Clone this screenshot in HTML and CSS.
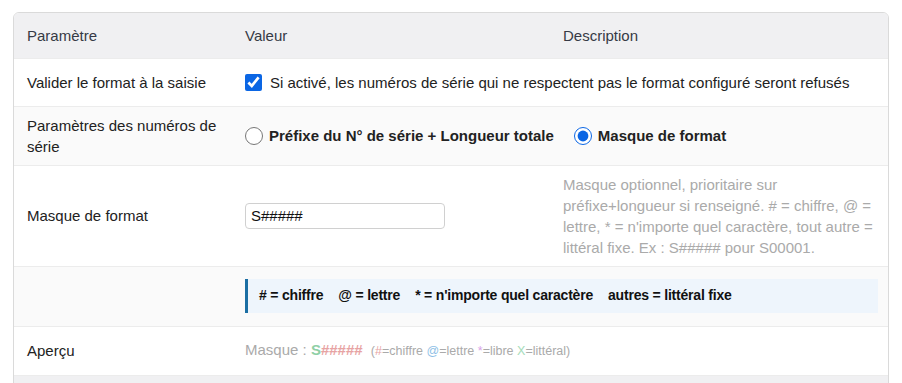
FILE: index.html
```html
<!DOCTYPE html>
<html lang="fr">
<head>
  <meta charset="UTF-8" />
  <meta name="viewport" content="width=device-width, initial-scale=1.0"/>
  <title>Paramètres des numéros de série</title>
  <link rel="stylesheet" href="styles.css">
</head>
<body>
  <div class="settings">
    <table class="settings-table">
      <colgroup>
        <col class="col-param" />
        <col class="col-value" />
        <col />
      </colgroup>
      <thead>
        <tr class="row-head">
          <th>Paramètre</th>
          <th>Valeur</th>
          <th>Description</th>
        </tr>
      </thead>
      <tbody>
        <tr class="row-check">
          <td>Valider le format à la saisie</td>
          <td colspan="2">
            <label class="check">
              <input type="checkbox" checked />
              <span>Si activé, les numéros de série qui ne respectent pas le format configuré seront refusés</span>
            </label>
          </td>
        </tr>
        <tr class="row-mode alt">
          <td>Paramètres des numéros de série</td>
          <td colspan="2">
            <div class="radios">
              <label class="radio"><input type="radio" name="mode" /> Préfixe du N° de série + Longueur totale</label>
              <label class="radio"><input type="radio" name="mode" checked /> Masque de format</label>
            </div>
          </td>
        </tr>
        <tr class="row-mask">
          <td>Masque de format</td>
          <td><input type="text" class="mask-input" value="S#####" /></td>
          <td class="desc">Masque optionnel, prioritaire sur préfixe+longueur si renseigné. # = chiffre, @ = lettre, * = n'importe quel caractère, tout autre = littéral fixe. Ex : S##### pour S00001.</td>
        </tr>
        <tr class="row-help alt">
          <td></td>
          <td colspan="2" class="help-cell">
            <div class="help">
              <span># = chiffre</span>
              <span>@ = lettre</span>
              <span>* = n'importe quel caractère</span>
              <span>autres = littéral fixe</span>
            </div>
          </td>
        </tr>
        <tr class="row-preview">
          <td>Aperçu</td>
          <td colspan="2" class="preview">
            Masque : <b class="lit">S</b><b class="num">#####</b>
            <small class="legend">(<i class="num">#</i>=chiffre <i class="let">@</i>=lettre <i class="any">*</i>=libre <i class="lit">X</i>=littéral)</small>
          </td>
        </tr>
        <tr class="row-foot">
          <td colspan="3"></td>
        </tr>
      </tbody>
    </table>
  </div>
</body>
</html>
```

FILE: styles.css
```css
:root {
  --border: #dadada;
  --line: #ececec;
  --head-bg: #f0f0f2;
  --alt-bg: #fafafa;
  --text: #222;
  --muted: #aaa;
  --blue: #0b66e4;
}

* {
  box-sizing: border-box;
}

body {
  font-family: "Liberation Sans", Arial, sans-serif;
  font-size: 15px;
  color: var(--text);
  background: #fff;
  margin: 0;
  padding: 12px 13px 0;
}

.settings {
  border: 1px solid var(--border);
  border-radius: 6px;
  overflow: hidden;
}

.settings-table {
  width: 100%;
  border-collapse: collapse;
  table-layout: fixed;
}

.col-param {
  width: 218px;
}

.col-value {
  width: 318px;
}

th, td {
  text-align: left;
  font-weight: normal;
  line-height: 21px;
  padding: 8px 13px;
  vertical-align: middle;
}

tbody tr {
  border-top: 1px solid var(--line);
}

.row-head {
  background: var(--head-bg);
  color: #363a45;
  height: 45px;
}

.row-check { height: 48px; }
.row-mode { height: 59px; }
.row-mask { height: 101px; }
.row-help { height: 59px; }
.row-preview { height: 49px; }

.alt {
  background: var(--alt-bg);
}

.row-foot {
  background: var(--head-bg);
  height: 30px;
}

.check {
  display: flex;
  align-items: center;
  gap: 8px;
}

.check input {
  width: 17px;
  height: 17px;
  margin: 0;
  accent-color: var(--blue);
}

.radios {
  display: flex;
  align-items: center;
  gap: 20px;
}

.radio {
  display: flex;
  align-items: center;
  gap: 6px;
  font-weight: bold;
}

.radio input {
  width: 18px;
  height: 18px;
  margin: 0;
  accent-color: var(--blue);
}

.mask-input {
  width: 200px;
  height: 26px;
  padding: 0 5px;
  border: 1px solid #d0d0d0;
  border-radius: 4px;
  font-family: inherit;
  font-size: 15px;
  color: #111;
}

.desc {
  color: var(--muted);
  padding-right: 10px;
  background: #fff;
}

.help-cell {
  padding: 12px 10px 13px 13px;
}

.help {
  display: flex;
  align-items: center;
  gap: 15px;
  height: 34px;
  padding: 0 11px;
  background: #eef5fc;
  border-left: 3px solid #1b6ea3;
  font-size: 14px;
  font-weight: bold;
  letter-spacing: -0.2px;
  color: #111;
}

.preview {
  color: var(--muted);
}

.preview b.lit { color: #8fd0a6; }
.preview b.num { color: #e7a3a3; }

.legend {
  font-size: 12.5px;
  margin-left: 4px;
}

.legend i {
  font-style: normal;
}

.legend .num { color: #e7a3a3; }
.legend .let { color: #8fbfe6; }
.legend .any { color: #d9a3ea; }
.legend .lit { color: #a5dcba; }
```
